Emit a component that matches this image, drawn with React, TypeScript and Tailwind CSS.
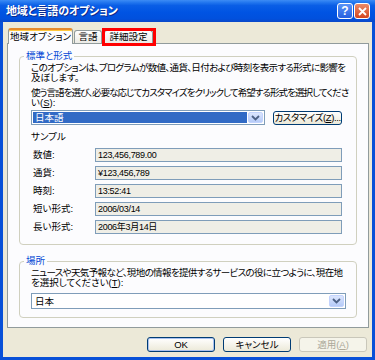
import React from "react";

function Chevron() {
  return (
    <svg width="9" height="6" viewBox="0 0 9 6">
      <path d="M1 1 L4.5 4.5 L8 1" fill="none" stroke="#4d6185" strokeWidth="1.8" />
    </svg>
  );
}

function Combo({ text, selected, h }: { text: string; selected?: boolean; h: string }) {
  return (
    <div className={`${h} flex border border-[#7f9db9] bg-white p-[1px]`}>
      <div
        className={
          selected
            ? "flex-1 flex items-center bg-[#316ac5] text-white pl-[2px] leading-[11px] whitespace-nowrap"
            : "flex-1 flex items-center pl-[2px] leading-[11px] whitespace-nowrap"
        }
      >
        {text}
      </div>
      <div className="w-[15px] ml-[1px] flex items-center justify-center rounded-[2px] bg-[linear-gradient(180deg,#dbe5fd,#b6cbf8)] border border-[#c3d3fd]">
        <Chevron />
      </div>
    </div>
  );
}

function Row({ label, value }: { label: string; value: string }) {
  return (
    <div className="flex items-center h-[14px]">
      <div className="w-[64px] pl-[2px] leading-[10px] whitespace-nowrap">{label}</div>
      <div className="flex-1 h-[14px] border border-[#7f9db9] bg-[#efeee6] pl-[2px] flex items-center text-[9px] tracking-[-0.3px] leading-[10px] whitespace-nowrap">
        {value}
      </div>
    </div>
  );
}

export default function App() {
  return (
    <div className="w-[375px] h-[360px] flex flex-col bg-[#0850d8] overflow-hidden font-['Liberation_Sans','Noto_Sans_CJK_JP',sans-serif] text-[9.5px] text-black [font-feature-settings:'palt']">
      {/* Title bar */}
      <div className="h-[22px] shrink-0 flex items-center pl-[6px] pr-[5px] bg-[linear-gradient(180deg,#3d8cf5_0%,#2579ef_10%,#0a5ee6_25%,#0054e3_55%,#0150dd_85%,#0a48c8_100%)]">
        <span className="text-white font-bold text-[11px] leading-none tracking-[-0.2px] [text-shadow:1px_1px_0_#0b2a8c]">
          地域と言語のオプション
        </span>
        <div className="ml-auto flex gap-[1px]">
          <div className="w-[16px] h-[16px] rounded-[3px] border border-white bg-[linear-gradient(180deg,#5a94f7,#2760e0)] flex items-center justify-center text-white font-bold text-[12px] leading-none font-['Liberation_Sans',sans-serif]">
            ?
          </div>
          <div className="w-[16px] h-[16px] rounded-[3px] border border-white bg-[linear-gradient(180deg,#ec8a68,#d4461f)] flex items-center justify-center">
            <svg width="9" height="9" viewBox="0 0 9 9">
              <path d="M1 1 L8 8 M8 1 L1 8" stroke="white" strokeWidth="1.8" />
            </svg>
          </div>
        </div>
      </div>

      {/* Body */}
      <div className="flex-1 mx-[3px] mb-[3px] bg-[#ece9d8] flex flex-col pl-[4px] pr-[3px] pt-[6px] relative">
        {/* Tabs */}
        <div className="flex items-end h-[15px]">
          <div className="ml-[1px] w-[65px] h-[16px] -mb-[1px] relative z-10 bg-[#fcfcfe] border-x border-[#919b9c] border-t-[2px] border-t-[#e68b2c] rounded-t-[3px] shadow-[inset_0_1px_0_#ffc83c] flex items-center justify-center leading-[10px] whitespace-nowrap">
            地域オプション
          </div>
          <div className="ml-[1px] w-[28px] h-[13px] bg-[linear-gradient(180deg,#ffffff,#ecebe6)] border-x border-t border-[#919b9c] rounded-t-[3px] flex items-center justify-center leading-[10px] whitespace-nowrap">
            言語
          </div>
          <div className="ml-[2px] w-[49px] h-[13px] bg-[linear-gradient(180deg,#ffffff,#ecebe6)] border-x border-t border-[#919b9c] rounded-t-[3px] flex items-center justify-center leading-[10px] whitespace-nowrap">
            詳細設定
          </div>
        </div>
        {/* Red annotation box */}
        <div className="absolute left-[99px] top-[6px] w-[54px] h-[18px] border-[3px] border-[#ff0000] z-20" />

        {/* Panel */}
        <div className="border border-[#919b9c] bg-[#fcfcfe] px-[11px] pt-[7px] pb-[9px]">
          <fieldset className="min-w-0 border border-[#d0d0bf] rounded-[4px] p-0 m-0">
            <legend className="ml-[4px] px-[2px] text-[#0046d5] leading-[10px]">標準と形式</legend>
            <div className="pl-[11px] pr-[14px] pt-[2px] pb-[10px]">
              <div className="w-[314px] leading-[10px] whitespace-nowrap tracking-[-1px] text-justify [text-align-last:justify]">
                このオプションは、プログラムが数値、通貨、日付および時刻を表示する形式に影響を
              </div>
              <div className="leading-[10px]">及ぼします。</div>
              <div className="mt-[5px] w-[317px] leading-[10px] whitespace-nowrap tracking-[-1.2px] text-justify [text-align-last:justify]">
                使う言語を選び、必要な応じてカスタマイズをクリックして希望する形式を選択してくださ
              </div>
              <div className="leading-[10px]">
                い(<u>S</u>):
              </div>
              <div className="mt-[2px] flex items-center gap-[8px]">
                <div className="w-[234px]">
                  <Combo text="日本語" selected h="h-[15px]" />
                </div>
                <div className="w-[69px] h-[14px] rounded-[3px] border border-[#003c74] bg-[linear-gradient(180deg,#ffffff,#ece9d8)] flex items-center justify-center leading-[10px] whitespace-nowrap tracking-[-0.4px]">
                  カスタマイズ(<u>Z</u>)...
                </div>
              </div>
              <div className="mt-[7px] leading-[10px]">サンプル</div>
              <div className="mt-[6px] flex flex-col gap-[4px]">
                <Row label="数値:" value="123,456,789.00" />
                <Row label="通貨:" value="¥123,456,789" />
                <Row label="時刻:" value="13:52:41" />
                <Row label="短い形式:" value="2006/03/14" />
                <Row label="長い形式:" value="2006年3月14日" />
              </div>
            </div>
          </fieldset>

          <fieldset className="min-w-0 mt-[11px] border border-[#d0d0bf] rounded-[4px] p-0 m-0">
            <legend className="ml-[4px] px-[2px] text-[#0046d5] leading-[10px]">場所</legend>
            <div className="pl-[11px] pr-[10px] pt-[2px] pb-[8px]">
              <div className="w-[311px] leading-[10px] whitespace-nowrap tracking-[-1px] text-justify [text-align-last:justify]">
                ニュースや天気予報など、現地の情報を提供するサービスの役に立つように、現在地
              </div>
              <div className="leading-[10px]">
                を選択してください(<u>T</u>):
              </div>
              <div className="mt-[5px]">
                <Combo text="日本" h="h-[16px]" />
              </div>
            </div>
          </fieldset>
        </div>

        {/* Buttons */}
        <div className="mt-[9px] flex justify-end gap-[8px] pr-[2px]">
          <div className="w-[68px] h-[15px] rounded-[3px] border border-[#003c74] bg-[linear-gradient(180deg,#ffffff,#ece9d8)] shadow-[inset_0_0_0_1px_#a9c1f0] flex items-center justify-center leading-[10px]">
            OK
          </div>
          <div className="w-[68px] h-[15px] rounded-[3px] border border-[#003c74] bg-[linear-gradient(180deg,#ffffff,#ece9d8)] flex items-center justify-center leading-[10px]">
            キャンセル
          </div>
          <div className="w-[68px] h-[15px] rounded-[3px] border border-[#c9c7ba] bg-[#f5f4ea] text-[#aca899] flex items-center justify-center leading-[10px]">
            適用(<u>A</u>)
          </div>
        </div>
      </div>
    </div>
  );
}
